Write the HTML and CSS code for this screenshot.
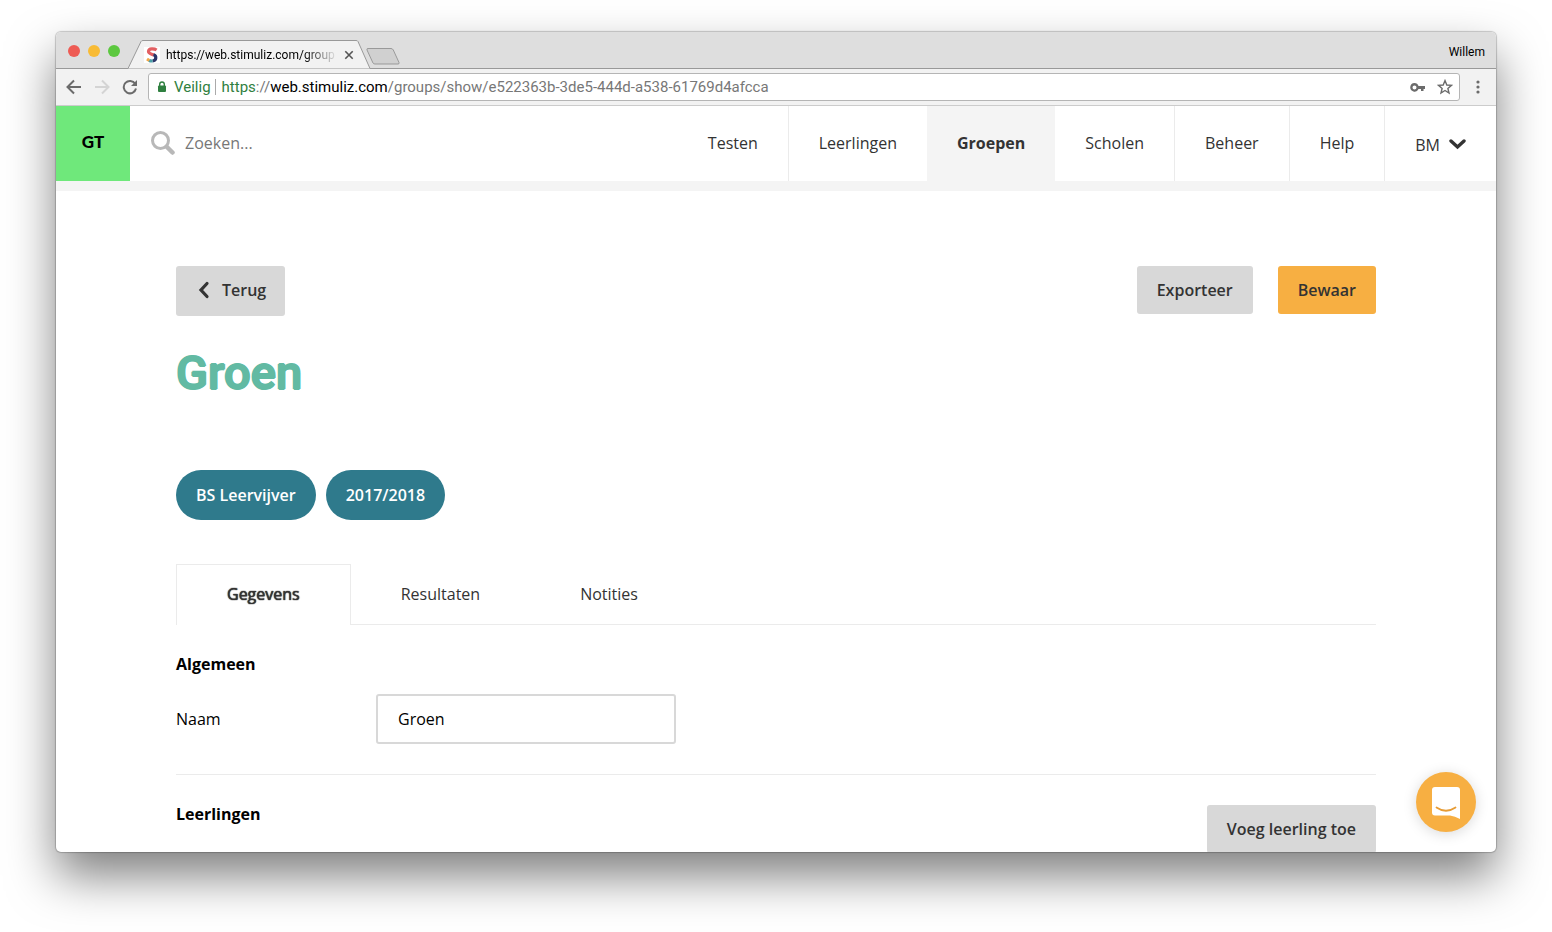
FILE: index.html
```html
<!DOCTYPE html>
<html lang="nl">
<head>
  <meta charset="UTF-8">
  <title>Groen - Stimuliz</title>
  <link rel="stylesheet" href="styles.css">
</head>
<body>

  <div class="window">

    <div class="titlebar">
      <div class="lights">
        <span class="light red"></span>
        <span class="light yellow"></span>
        <span class="light green"></span>
      </div>
      <div class="tab">
        <svg class="tab-shape" width="243" height="29" viewBox="0 0 243 29">
          <path d="M0 28.5 L13 1.5 Q13.5 0.5 15 0.5 H228 Q229.500 0.500 230 1.500 L242 28.500" fill="#f2f2f2" stroke="#999"/>
        </svg>
        <div class="tab-content">
          <svg width="16" height="16" viewBox="0 0 16 16" fill="none" stroke-width="3.200">
            <rect width="16" height="16" fill="#fff"/>
            <path d="M12.600 3 C10.500 1.600 4.600 1 4.500 4.400 C4.400 7.200 8 6.800 10 8.200" stroke="#e25f62"/>
            <path d="M9.500 7.800 C12.800 8.800 12.600 13.500 8.500 14" stroke="#2b3568"/>
            <path d="M8.500 14 C7 14.100 5.800 13.800 5 13.300" stroke="#4aa0a8"/>
            <path d="M5.300 13.500 L3 12" stroke="#f0a848"/>
          </svg>
          <span class="tab-title">https://web.stimuliz.com/group</span>
          <button class="bare" aria-label="Tabblad sluiten">
            <svg width="10" height="10" viewBox="0 0 10 10" stroke="#555" stroke-width="1.600"><path d="M1.300 1.300 L8.700 8.700 M8.700 1.300 L1.300 8.700"/></svg>
          </button>
        </div>
      </div>
      <button class="bare new-tab" aria-label="Nieuw tabblad">
        <svg width="34" height="17" viewBox="0 0 34 17"><path d="M2 0.500 H25 Q26.500 0.500 27.300 2 L33 14.500 Q33.500 16 32 16 H9 Q7.500 16 7 15 L1 2 Q0.500 0.500 2 0.500 Z" fill="#d0d0d0" stroke="#999"/></svg>
      </button>
      <span class="profile">Willem</span>
    </div>

    <div class="toolbar">
      <button class="bare" aria-label="Vorige">
        <svg width="16" height="16" viewBox="0 0 16 16" fill="none" stroke="#6b6b6b" stroke-width="2"><path d="M15 8 H2 M8 1.500 L1.500 8 L8 14.500"/></svg>
      </button>
      <button class="bare" aria-label="Volgende">
        <svg width="16" height="16" viewBox="0 0 16 16" fill="none" stroke="#d4d4d4" stroke-width="2"><path d="M1 8 H14 M8 1.500 L14.500 8 L8 14.500"/></svg>
      </button>
      <button class="bare" aria-label="Vernieuwen">
        <svg width="16" height="16" viewBox="0 0 16 16"><path d="M13.200 4.800 A6.200 6.200 0 1 0 14 9.600" fill="none" stroke="#6b6b6b" stroke-width="2"/><path d="M15 1 V7 H9 Z" fill="#6b6b6b"/></svg>
      </button>
      <div class="address">
        <svg width="10" height="12" viewBox="0 0 10 12"><rect x="1" y="4.500" width="8" height="6.500" rx="1" fill="#2f8040"/><path d="M2.700 5 V3.300 A2.300 2.300 0 0 1 7.300 3.300 V5" fill="none" stroke="#2f8040" stroke-width="1.400"/></svg>
        <span class="secure">Veilig</span>
        <span class="url"><span class="scheme">https</span>://<span class="host">web.stimuliz.com</span>/groups/show/e522363b-3de5-444d-a538-61769d4afcca</span>
        <svg width="15" height="9" viewBox="0 0 15 9"><path fill="#6b6b6b" fill-rule="evenodd" d="M4.500 0 A4.300 4.300 0 0 1 8.500 3 H15 V6 H13.500 V8 H11 V6 H8.500 A4.300 4.300 0 1 1 4.500 0 Z M4.500 2.500 A2 2 0 1 0 4.500 6.500 A2 2 0 1 0 4.500 2.500 Z"/></svg>
        <svg width="16" height="16" viewBox="0 0 16 16"><path d="M8 1.600 L9.800 6 L14.500 6.300 L10.900 9.400 L12 14 L8 11.500 L4 14 L5.100 9.400 L1.500 6.300 L6.200 6 Z" fill="none" stroke="#6b6b6b" stroke-width="1.400"/></svg>
      </div>
      <button class="bare menu" aria-label="Menu">
        <svg width="4" height="14" viewBox="0 0 4 14" fill="#6b6b6b"><circle cx="2" cy="2" r="1.600"/><circle cx="2" cy="7" r="1.600"/><circle cx="2" cy="12" r="1.600"/></svg>
      </button>
    </div>

    <div class="page">
      <header class="header">
        <a class="logo" href="#">GT</a>
        <label class="search">
          <svg width="24" height="24" viewBox="0 0 24 24" fill="none" stroke="#b8b8b8"><circle cx="9.500" cy="9.500" r="8" stroke-width="3"/><path d="M16 16 L21.500 21.500" stroke-width="4.500" stroke-linecap="round"/></svg>
          <input type="text" placeholder="Zoeken..." aria-label="Zoeken">
        </label>
        <nav class="nav">
          <a href="#">Testen</a>
          <a href="#">Leerlingen</a>
          <a href="#" class="active">Groepen</a>
          <a href="#">Scholen</a>
          <a href="#">Beheer</a>
          <a href="#">Help</a>
          <a href="#" class="user">BM
            <svg width="17" height="11" viewBox="0 0 17 11" fill="none" stroke="#333" stroke-width="3.400" stroke-linecap="round"><path d="M2 2 L8.500 8 L15 2"/></svg>
          </a>
        </nav>
      </header>

      <main class="content">
        <div class="actions">
          <button class="btn back">
            <svg width="12" height="18" viewBox="0 0 12 18" fill="none" stroke="#333" stroke-width="3.200" stroke-linecap="round"><path d="M9 2.500 L3 9 L9 15.500"/></svg>
            Terug
          </button>
          <div class="actions-right">
            <button class="btn">Exporteer</button>
            <button class="btn primary">Bewaar</button>
          </div>
        </div>

        <h1>Groen</h1>

        <div class="tags">
          <span class="tag">BS Leervijver</span>
          <span class="tag">2017/2018</span>
        </div>

        <div class="tabs">
          <a href="#" class="current">Gegevens</a>
          <a href="#">Resultaten</a>
          <a href="#">Notities</a>
        </div>

        <section class="section">
          <h2>Algemeen</h2>
          <div class="field">
            <label for="name">Naam</label>
            <input type="text" id="name" name="name" value="Groen">
          </div>
        </section>

        <section class="section students">
          <h2>Leerlingen</h2>
          <button class="btn">Voeg leerling toe</button>
        </section>
      </main>
    </div>

    <button class="chat" aria-label="Chat">
      <svg width="30" height="34" viewBox="0 0 30 34"><path d="M4 2 H26 Q29 2 29 5 V34 Q24 31 19 30.500 H4 Q1 30.500 1 27.500 V5 Q1 2 4 2 Z" fill="#fff"/><path d="M5.500 22.500 Q15 29 24.500 22.500" fill="none" stroke="#e79c35" stroke-width="1.800" stroke-linecap="round"/></svg>
    </button>
  </div>

</body>
</html>
```
FILE: styles.css
```css
* {
  box-sizing: border-box;
}

body {
  display: flex;
  height: 100vh;
  margin: 0;
  padding: 32px 56px 80px;
  background-color: #fff;
  font-family: "Open Sans", sans-serif;
  font-size: 16px;
  line-height: 22px;
  color: #000;
}

a {
  color: inherit;
  text-decoration: none;
}

svg {
  display: block;
  flex: none;
}

input, button {
  font: inherit;
}

.window {
  position: relative;
  display: flex;
  flex-direction: column;
  flex: 1;
  min-width: 0;
  overflow: hidden;
  border-radius: 5px;
  background-color: #fff;
  box-shadow: 0 0 1px 1px rgba(0, 0, 0, 0.2), 0 24px 48px rgba(0, 0, 0, 0.5);
}

/* browser bars */
.titlebar {
  display: flex;
  align-items: flex-end;
  flex: none;
  height: 37px;
  padding: 0 11px 0 12px;
  border-bottom: 1px solid #999;
  background-color: #dedede;
  font-family: Roboto, sans-serif;
  font-size: 12px;
  line-height: 16px;
}

.lights {
  display: flex;
  gap: 8px;
  width: 60px;
  padding-bottom: 11px;
}

.light {
  width: 12px;
  height: 12px;
  border-radius: 50%;
}

.red {
  background-color: #ee5b54;
}

.yellow {
  background-color: #f8bb35;
}

.green {
  background-color: #5cc83f;
}

.tab {
  display: grid;
  margin-bottom: -1px;
}

.tab-shape,
.tab-content {
  grid-area: 1 / 1;
}

.tab-content {
  display: flex;
  align-items: center;
  gap: 6px;
  padding: 0 16px;
}

.tab-title {
  width: 172px;
  white-space: nowrap;
  -webkit-mask-image: linear-gradient(to right, #000 80%, transparent);
  mask-image: linear-gradient(to right, #000 80%, transparent);
}

.bare {
  padding: 0;
  border: none;
  background: none;
}

.new-tab {
  margin: 0 auto 3px -5px;
}

.profile {
  padding-bottom: 8px;
}

.toolbar {
  display: flex;
  align-items: center;
  gap: 12px;
  flex: none;
  height: 37px;
  padding: 0 16px 0 10px;
  border-bottom: 1px solid #ccc;
  background-color: #f2f2f2;
}

.address {
  display: flex;
  align-items: center;
  gap: 12px;
  flex: 1;
  height: 28px;
  margin-left: -2px;
  padding: 0 6px 0 8px;
  border: 1px solid #b5b5b5;
  border-radius: 3px;
  background-color: #fff;
  font-family: Roboto, sans-serif;
  font-size: 15px;
  line-height: 16px;
}

.secure {
  margin: 0 -6px 0 -5px;
  padding-right: 4px;
  border-right: 1px solid #aaa;
  color: #2f8040;
}

.url {
  flex: 1;
  color: #777;
}

.scheme {
  color: #2f8040;
}

.host {
  color: #000;
}

.menu {
  margin-left: 4px;
}

/* page */
.page {
  flex: 1;
  min-height: 0;
  overflow: hidden;
}

.header {
  display: flex;
  height: 85px;
  border-bottom: 10px solid #f4f4f4;
}

.logo {
  display: flex;
  align-items: center;
  justify-content: center;
  width: 74px;
  padding-bottom: 4px;
  background-color: #6fe87b;
  font-family: Lato, sans-serif;
  font-size: 17px;
  font-weight: 900;
}

.search {
  display: flex;
  align-items: center;
  gap: 10px;
  flex: 1;
  min-width: 0;
  padding: 0 0 2px 21px;
}

.search input {
  flex: 1;
  min-width: 0;
  padding: 0;
  border: none;
}

.search input::placeholder {
  color: #777;
}

.nav {
  display: flex;
  color: #333;
}

.nav a {
  display: flex;
  align-items: center;
  padding: 0 30px 2px;
  border-left: 1px solid #ebebeb;
}

.nav a:first-child {
  border-left: none;
}

.nav .active {
  padding-left: 29px;
  border-left-color: #f4f4f4;
  background-color: #f4f4f4;
  font-weight: bold;
}

.nav .active + a {
  border-left: none;
}

.nav .user {
  gap: 9px;
  padding-top: 4px;
}

.content {
  padding: 75px 120px 0;
}

.actions {
  display: flex;
  align-items: flex-start;
  justify-content: space-between;
}

.actions-right {
  display: flex;
  gap: 25px;
}

.btn {
  height: 48px;
  padding: 0 20px;
  border: none;
  border-radius: 3px;
  background-color: #d8d8d8;
  color: #333;
  font-weight: 600;
}

.back {
  display: flex;
  align-items: center;
  gap: 12px;
  height: 50px;
  padding: 0 19px 2px 22px;
}

.primary {
  background-color: #f7af42;
}

/* the shadows thicken the letters and soften their corners */
h1 {
  margin: 28px 0 68px;
  color: #62baa3;
  font-family: Roboto, sans-serif;
  font-size: 47px;
  font-weight: 500;
  line-height: 58px;
  text-shadow: 1px 0 #62baa3, -1px 0 #62baa3, 0 1px #62baa3, 0 -1px #62baa3;
}

.tags {
  display: flex;
  gap: 10px;
}

.tag {
  padding: 14px 20px;
  border-radius: 25px;
  background-color: #2f7a8c;
  color: #fff;
  font-weight: 600;
}

.tabs {
  display: flex;
  margin-top: 44px;
  border-bottom: 1px solid #ebebeb;
  color: #333;
}

.tabs a {
  padding: 19px 50px;
}

.tabs .current {
  margin-bottom: -1px;
  padding: 18px 50px 20px;
  border: 1px solid #ebebeb;
  border-bottom: none;
  background-color: #fff;
  text-shadow: 0 0 1px #333, 0 0 1px #333;
}

.section {
  padding: 28px 0 30px;
  border-bottom: 1px solid #ebebeb;
}

h2 {
  margin: 0;
  font-size: 16px;
  font-weight: bold;
  line-height: 22px;
}

.field {
  display: flex;
  align-items: center;
  margin-top: 19px;
}

.field label {
  width: 200px;
}

.field input {
  width: 300px;
  height: 50px;
  padding: 0 20px;
  border: 2px solid #d8d8d8;
  border-radius: 3px;
}

.students {
  display: flex;
  align-items: flex-start;
  justify-content: space-between;
}

.students .btn {
  margin-top: 2px;
}

.chat {
  position: absolute;
  right: 20px;
  bottom: 20px;
  display: flex;
  align-items: center;
  justify-content: center;
  width: 60px;
  height: 60px;
  padding: 0;
  border: none;
  border-radius: 50%;
  background-color: #f7af42;
  box-shadow: 0 2px 14px rgba(0, 0, 0, 0.15);
}
```
